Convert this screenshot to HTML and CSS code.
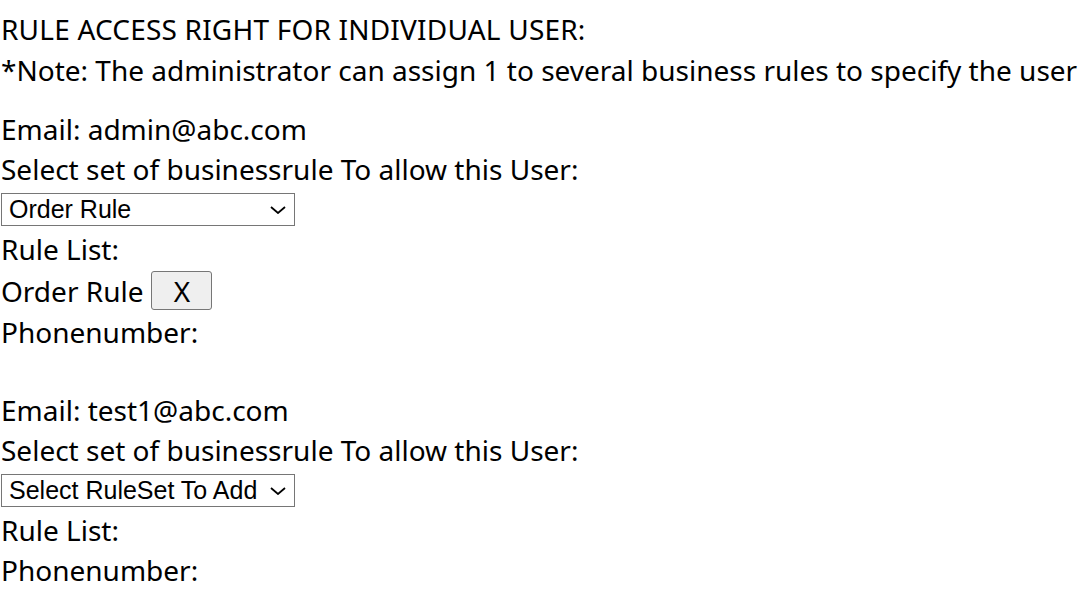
FILE: index.html
```html
<!DOCTYPE html>
<html>
<head>
<meta charset="utf-8">
<link rel="stylesheet" href="styles.css">
</head>
<body>
<div class="page">
  <div class="header">
    <div class="line title">RULE ACCESS RIGHT FOR INDIVIDUAL USER:</div>
    <div class="line">*Note: The administrator can assign 1 to several business rules to specify the user</div>
  </div>
  <div class="user">
    <div class="line">Email: admin@abc.com</div>
    <div class="line">Select set of businessrule To allow this User:</div>
    <div class="line select-line">
      <span class="select-wrap">
        <select class="rule-select">
          <option>Order Rule</option>
        </select>
        <svg class="chevron" width="16" height="8" viewBox="0 0 16 8"><path d="M1 1 L8 7 L15 1" fill="none" stroke="#000" stroke-width="1.8"/></svg>
      </span>
    </div>
    <div class="line">Rule List:</div>
    <div class="rule-item">
      <span>Order Rule</span>
      <button class="remove-btn">X</button>
    </div>
    <div class="line">Phonenumber:</div>
  </div>
  <div class="user">
    <div class="line">Email: test1@abc.com</div>
    <div class="line">Select set of businessrule To allow this User:</div>
    <div class="line select-line">
      <span class="select-wrap">
        <select class="rule-select">
          <option>Select RuleSet To Add</option>
        </select>
        <svg class="chevron" width="16" height="8" viewBox="0 0 16 8"><path d="M1 1 L8 7 L15 1" fill="none" stroke="#000" stroke-width="1.8"/></svg>
      </span>
    </div>
    <div class="line">Rule List:</div>
    <div class="line">Phonenumber:</div>
  </div>
</div>
</body>
</html>
```

FILE: styles.css
```css
html, body {
  margin: 0;
  padding: 0;
  background: #ffffff;
}

.page {
  padding: 9px 0 0 1px;
  font-family: "Noto Sans", "Open Sans", sans-serif;
  font-size: 28px;
  line-height: 40px;
  color: #000000;
}

.header {
  display: flex;
  flex-direction: column;
  gap: 1px;
}

.line {
  height: 40px;
  white-space: nowrap;
}

.title {
  letter-spacing: 0.2px;
}

.user {
  margin-top: 19px;
}

.user + .user {
  margin-top: 38px;
}

.select-line {
  display: flex;
  align-items: center;
}

.select-wrap {
  position: relative;
  display: inline-flex;
}

.rule-select {
  appearance: none;
  -webkit-appearance: none;
  width: 294px;
  height: 33px;
  margin: 0;
  font-family: "Liberation Sans", Arial, sans-serif;
  font-size: 25px;
  color: #000000;
  background: #ffffff;
  border: 1px solid #767676;
  border-radius: 0;
  padding: 0 30px 0 7px;
}

.chevron {
  position: absolute;
  right: 9px;
  top: 13px;
  pointer-events: none;
}

.rule-item {
  display: flex;
  align-items: center;
  gap: 8px;
  height: 43px;
}

.remove-btn {
  width: 61px;
  height: 39px;
  margin: 0;
  padding: 0;
  font-family: "Noto Sans", "Open Sans", sans-serif;
  font-size: 28px;
  color: #000000;
  background: #efefef;
  border: 1px solid #767676;
  border-radius: 3px;
}
```
